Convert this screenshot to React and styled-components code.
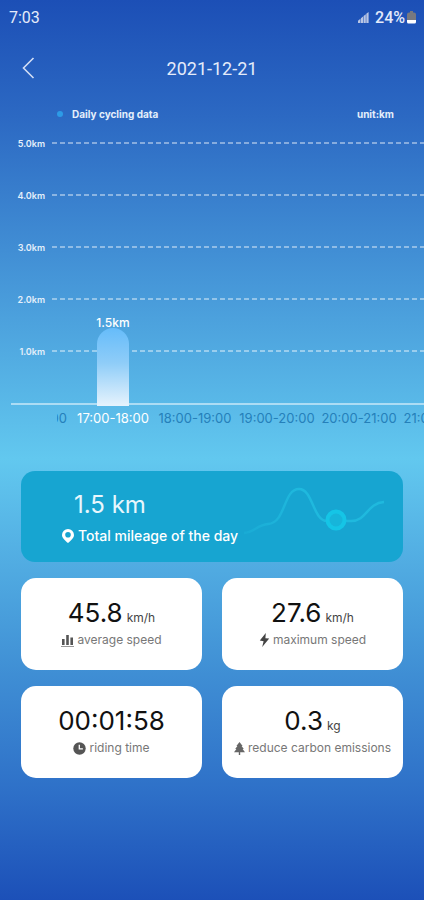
import styled, { createGlobalStyle } from 'styled-components';

const GlobalStyle = createGlobalStyle`
  * {
    box-sizing: border-box;
  }

  body {
    margin: 0;
    font-family: Inter, 'Liberation Sans', sans-serif;
    color: #fff;
    background: #1c50b7;
  }
`;

const Page = styled.div`
  min-height: 100vh;
  overflow: hidden;
  background: linear-gradient(
    180deg,
    #1c4fb6 0%,
    #2c69c3 13%,
    #62c8ef 51%,
    #3f8ed4 75%,
    #2e70c8 88%,
    #1c50b8 100%
  );
`;

const StatusBar = styled.div`
  display: flex;
  align-items: center;
  justify-content: space-between;
  height: 34px;
  padding: 0 8px 0 9px;
  font-family: Roboto, sans-serif;
  font-size: 16px;
  color: #e4ebfa;
`;

const StatusIcons = styled.div`
  display: flex;
  align-items: center;
  gap: 2px;
`;

const Percent = styled.span`
  margin-left: 4px;
  font-weight: 500;
`;

const Header = styled.header`
  display: grid;
  grid-template-columns: 56px 1fr 56px;
  align-items: center;
  height: 68px;
`;

const BackButton = styled.button`
  display: flex;
  justify-content: center;
  padding: 8px;
  border: 0;
  background: none;
  color: #d3def5;
`;

const Title = styled.h1`
  margin: 0;
  font-family: Roboto, sans-serif;
  font-size: 18px;
  font-weight: 400;
  text-align: center;
  color: #e4ebfa;
`;

const Legend = styled.div`
  display: flex;
  align-items: center;
  height: 24px;
  padding: 0 30px 0 57px;
  font-size: 10px;
  font-weight: 700;
  color: #e4effb;
`;

const Dot = styled.span`
  width: 6px;
  height: 6px;
  margin-right: 9px;
  border-radius: 50%;
  background: #2d9be6;
`;

const Unit = styled.span`
  margin-left: auto;
`;

const Plot = styled.div`
  position: relative;
  display: flex;
  flex-direction: column;
  gap: 40px;
  margin: 11px 0 0 11px;
  padding-bottom: 46px;
  border-bottom: 2px solid rgba(255, 255, 255, 0.5);
`;

const Tick = styled.div`
  display: flex;
  align-items: center;
  gap: 7px;
  height: 12px;
  font-size: 9px;
  font-weight: 600;
  color: #e4effb;
`;

const TickLabel = styled.span`
  width: 34px;
  text-align: right;
`;

const GridLine = styled.span`
  flex: 1;
  height: 2px;
  background: repeating-linear-gradient(
    90deg,
    rgba(255, 255, 255, 0.42) 0 5px,
    transparent 5px 8px
  );
`;

const Bar = styled.div`
  position: absolute;
  left: 86px;
  bottom: -3px;
  width: 32px;
  height: 78px;
  border-radius: 16px 16px 0 0;
  background: linear-gradient(180deg, #66bcfa 0%, #8fcdf8 45%, #e6f3fd 100%);
`;

const BarLabel = styled.span`
  position: absolute;
  bottom: 100%;
  left: 50%;
  margin-bottom: -3px;
  transform: translateX(-50%);
  font-size: 12px;
  font-weight: 500;
  line-height: 16px;
  white-space: nowrap;
`;

const Hours = styled.div`
  margin-left: 57px;
  overflow: hidden;
`;

const HoursTrack = styled.div`
  display: flex;
  margin-left: -67px;
`;

const Hour = styled.span`
  flex: 0 0 82px;
  font-size: 13px;
  line-height: 26px;
  text-align: center;
  white-space: nowrap;
  color: ${props => (props.$active ? '#fff' : '#2580ba')};
`;

const Content = styled.main`
  display: grid;
  grid-template-columns: 1fr 1fr;
  gap: 16px 20px;
  padding: 40px 21px 32px;
`;

const Summary = styled.section`
  position: relative;
  grid-column: 1 / -1;
  height: 91px;
  padding: 18px 0 0 41px;
  border-radius: 14px;
  background: #17a5d1;
`;

const Mileage = styled.div`
  padding-left: 12px;
  font-size: 24px;
  line-height: 32px;
  color: #e8f7fd;
`;

const Caption = styled.div`
  display: flex;
  align-items: center;
  gap: 4px;
  font-size: 14px;
  font-weight: 500;
  line-height: 30px;
`;

const Wave = styled.svg`
  position: absolute;
  top: 0;
  right: 0;
`;

const Card = styled.section`
  display: flex;
  flex-direction: column;
  align-items: center;
  height: 92px;
  padding-top: 19px;
  border-radius: 15px;
  background: #fff;
  color: #111;
`;

const Value = styled.div`
  font-size: 26px;
  line-height: 32px;
`;

const ValueUnit = styled.span`
  margin-left: 4px;
  font-size: 12px;
  line-height: 12px;
  color: #444;
`;

const CardLabel = styled.div`
  display: flex;
  align-items: center;
  gap: 3px;
  font-size: 12px;
  line-height: 22px;
  white-space: nowrap;
  color: #777;
`;

const SpeedIcon = () => (
  <svg width="13" height="13" viewBox="0 0 13 13" fill="#555">
    <path d="M1 5h2.6v6H1zM5.2 1h2.6v10H5.2zM9.4 3.4H12V11H9.4z" />
    <path d="M0 12h13v1H0z" fill="#999" />
  </svg>
);

const BoltIcon = () => (
  <svg width="11" height="14" viewBox="0 0 11 14" fill="#444">
    <path d="M6.8 0 0.8 7.6 4.6 8.2 3.2 14 10.2 5.6 6.4 5.2z" />
  </svg>
);

const ClockIcon = () => (
  <svg width="13" height="13" viewBox="0 0 13 13">
    <circle cx="6.5" cy="6.5" r="6.2" fill="#555" />
    <path d="M6.3 2.8v4h3.6" fill="none" stroke="#fff" strokeWidth="1.3" />
  </svg>
);

const TreeIcon = () => (
  <svg width="11" height="13" viewBox="0 0 11 13" fill="#666">
    <path d="M5.5 0 8.6 4H7.6L9.8 7H8.6L11 10.2H6.2V13H4.8v-2.8H0L2.4 7H1.2L3.4 4H2.4z" />
  </svg>
);

const PinIcon = () => (
  <svg width="12" height="14" viewBox="0 0 12 14" fill="#fff">
    <path
      fillRule="evenodd"
      d="M6 0a6 6 0 0 1 6 6c0 3.2-3.4 5.8-6 8-2.6-2.2-6-4.8-6-8a6 6 0 0 1 6-6zm0 3a2.8 2.8 0 1 0 0 5.6A2.8 2.8 0 0 0 6 3z"
    />
  </svg>
);

const SignalIcon = () => (
  <svg width="11" height="11" viewBox="0 0 11 11" fill="#b9c6e4">
    <path d="M0 8.8 2.4 6.8V11H0zM2.9 6.2l2.2-1.8V11H2.9zM5.6 4 7.8 2.2V11H5.6zM8.3 1.8 10.6 0v11H8.3z" />
  </svg>
);

const BatteryIcon = () => (
  <svg width="9" height="13" viewBox="0 0 9 13">
    <path d="M3 0h3v1.5h1a2 2 0 0 1 2 2V9H0V3.5a2 2 0 0 1 2-2h1z" fill="#77797f" />
    <path d="M0 9h9v2a1.5 1.5 0 0 1-1.5 1.5h-6A1.5 1.5 0 0 1 0 11z" fill="#fff" />
  </svg>
);

const ticks = ['5.0km', '4.0km', '3.0km', '2.0km', '1.0km'];

const hours = [
  '16:00-17:00',
  '17:00-18:00',
  '18:00-19:00',
  '19:00-20:00',
  '20:00-21:00',
  '21:00-22:00',
];

const stats = [
  { value: '45.8', unit: 'km/h', label: 'average speed', Icon: SpeedIcon },
  { value: '27.6', unit: 'km/h', label: 'maximum speed', Icon: BoltIcon },
  { value: '00:01:58', label: 'riding time', Icon: ClockIcon },
  { value: '0.3', unit: 'kg', label: 'reduce carbon emissions', Icon: TreeIcon },
];

const App = () => {
  return (
    <>
      <GlobalStyle />
      <Page>
        <StatusBar>
          <span>7:03</span>
          <StatusIcons>
            <SignalIcon />
            <Percent>24%</Percent>
            <BatteryIcon />
          </StatusIcons>
        </StatusBar>
        <Header>
          <BackButton aria-label="Back">
            <svg width="13" height="22" viewBox="0 0 13 22" fill="none">
              <path d="M11.5 1 1.5 11l10 10" stroke="currentColor" strokeWidth="1.6" />
            </svg>
          </BackButton>
          <Title>2021-12-21</Title>
        </Header>

        <Legend>
          <Dot />
          <span>Daily cycling data</span>
          <Unit>unit:km</Unit>
        </Legend>
        <Plot>
          {ticks.map(tick => (
            <Tick key={tick}>
              <TickLabel>{tick}</TickLabel>
              <GridLine />
            </Tick>
          ))}
          <Bar>
            <BarLabel>1.5km</BarLabel>
          </Bar>
        </Plot>
        <Hours>
          <HoursTrack>
            {hours.map((hour, i) => (
              <Hour key={hour} $active={i === 1}>
                {hour}
              </Hour>
            ))}
          </HoursTrack>
        </Hours>

        <Content>
          <Summary>
            <Wave width="160" height="91" viewBox="0 0 160 91" fill="none">
              <defs>
                <linearGradient id="wave" x1="0" x2="1" y1="0" y2="0">
                  <stop offset="0" stopColor="#1fb9de" stopOpacity="0.3" />
                  <stop offset="0.4" stopColor="#1fb9de" />
                  <stop offset="1" stopColor="#1fb9de" />
                </linearGradient>
              </defs>
              <path
                d="M1 62C12 61 14 54 25 53C43 52 40 18 56 18C70 18 70 50 84 50H108C124 50 124 32 141 31"
                stroke="url(#wave)"
                strokeWidth="2.4"
              />
              <circle cx="93" cy="49" r="8.5" fill="#17b5da" stroke="#15c5e6" strokeWidth="4" />
            </Wave>
            <Mileage>1.5 km</Mileage>
            <Caption>
              <PinIcon />
              <span>Total mileage of the day</span>
            </Caption>
          </Summary>
          {stats.map(({ value, unit, label, Icon }) => (
            <Card key={label}>
              <Value>
                {value}
                {unit && <ValueUnit>{unit}</ValueUnit>}
              </Value>
              <CardLabel>
                <Icon />
                <span>{label}</span>
              </CardLabel>
            </Card>
          ))}
        </Content>
      </Page>
    </>
  );
};

export default App;
